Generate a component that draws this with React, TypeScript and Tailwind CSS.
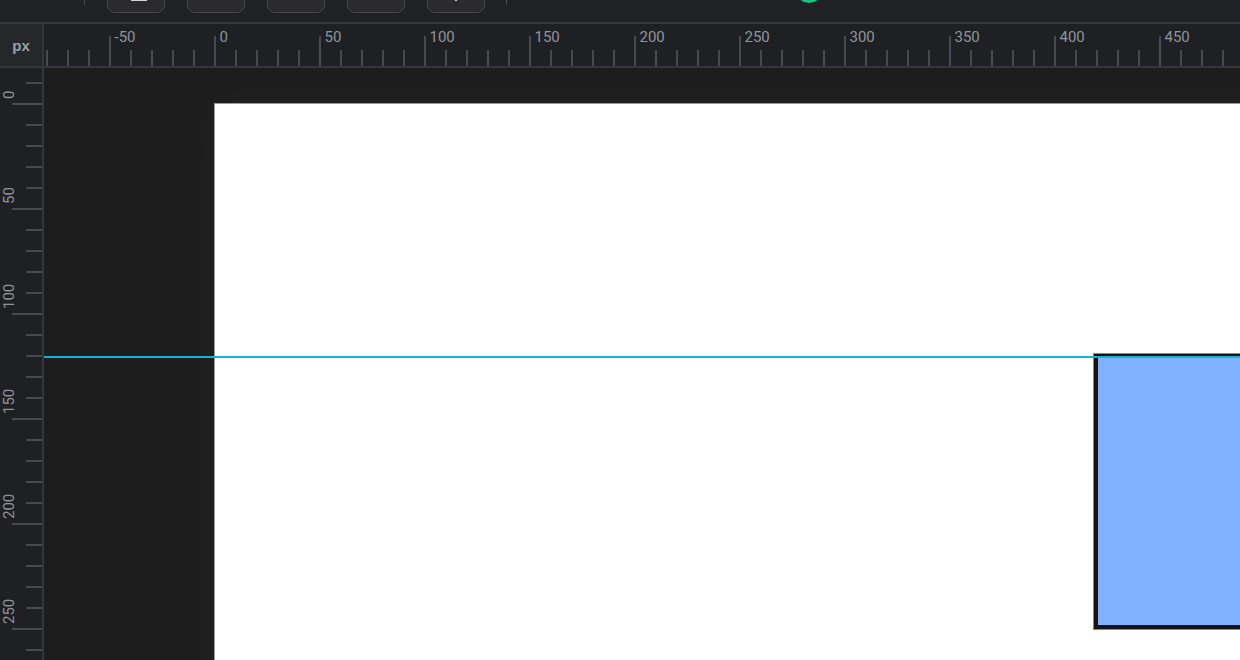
import React from "react";

const TICK = "#555a62";
const LABEL = "#8f949c";

function HRuler() {
  const items: React.ReactNode[] = [];
  for (let v = -80; v <= 480; v += 10) {
    const x = 171 + 2.1 * v;
    const major = v % 50 === 0;
    items.push(
      <rect key={"t" + v} x={x - 0.75} y={major ? 12 : 26} width={1.5} height={major ? 30 : 16} fill={TICK} />
    );
    if (major) {
      items.push(
        <text key={"l" + v} x={x + 4.5} y={18.3} fill={LABEL} fontSize={15} fontFamily="Roboto, 'Liberation Sans', sans-serif">
          {v}
        </text>
      );
    }
  }
  return (
    <svg width={1196} height={42} className="block">
      {items}
    </svg>
  );
}

function VRuler() {
  const items: React.ReactNode[] = [];
  for (let v = -10; v <= 270; v += 10) {
    const y = 36 + 2.1 * v;
    const major = v % 50 === 0;
    items.push(
      <rect key={"t" + v} x={major ? 12 : 26} y={y - 0.75} width={major ? 30 : 16} height={1.5} fill={TICK} />
    );
    if (major) {
      items.push(
        <text
          key={"l" + v}
          transform={`translate(13.8, ${y - 5}) rotate(-90)`}
          fill={LABEL}
          fontSize={15}
          fontFamily="Roboto, 'Liberation Sans', sans-serif"
        >
          {v}
        </text>
      );
    }
  }
  return (
    <svg width={42} height={592} className="block">
      {items}
    </svg>
  );
}

function ToolButton({ children }: { children?: React.ReactNode }) {
  return (
    <div className="relative flex h-[32px] w-[58px] shrink-0 flex-col items-center justify-end rounded-[8px] border border-[#46474c] bg-[#2a2a2e] pb-[11px]">
      {children}
    </div>
  );
}

export default function App() {
  return (
    <div className="flex h-[660px] w-[1240px] flex-col overflow-hidden bg-[#1d1d1e] font-['Liberation_Sans',sans-serif]">
      {/* toolbar */}
      <div className="flex h-[24px] shrink-0 items-end overflow-hidden border-b-2 border-[#37383c] bg-[#202124] pb-[9px]">
        <div className="mb-[8px] ml-[84px] h-[24px] w-px shrink-0 bg-[#4a4b50]" />
        <div className="ml-[22px] flex gap-[22px]">
          <ToolButton>
            <div className="ml-[6px] h-[2px] w-[16px] bg-[#d4d4d6]" />
          </ToolButton>
          <ToolButton />
          <ToolButton />
          <ToolButton />
          <ToolButton>
            <div className="h-[2px] w-[2px] bg-[#d4d4d6]" />
          </ToolButton>
        </div>
        <div className="mb-[8px] ml-[21px] h-[24px] w-px shrink-0 bg-[#4a4b50]" />
        <div className="mb-[10px] ml-[288px] h-[28px] w-[28px] shrink-0 rounded-full bg-[#12c47b]" />
      </div>

      {/* ruler row */}
      <div className="flex h-[44px] shrink-0 border-b-2 border-[#34363b]">
        <div className="flex h-[42px] w-[44px] shrink-0 items-center justify-center border-r-2 border-[#34363b] bg-[#25272b]">
          <span className="text-[15px] font-bold leading-none text-[#9aa0a8]">px</span>
        </div>
        <div className="flex-1 bg-[#1f2023]">
          <HRuler />
        </div>
      </div>

      {/* main */}
      <div className="flex min-h-0 flex-1">
        <div className="w-[44px] shrink-0 border-r-2 border-[#34363b] bg-[#1f2023]">
          <VRuler />
        </div>
        <div className="relative min-w-0 flex-1 overflow-hidden bg-[#1d1d1e] pl-[170px] pt-[35px]">
          <div className="relative h-[800px] w-[1400px] border border-[#9a9a9a] bg-white shadow-[0_0_50px_rgba(255,255,255,0.03)]">
            <div className="absolute left-[878px] top-[249px] h-[277px] w-[400px] border border-[#8a8a8a]">
              <div className="h-full w-full border-4 border-[#141414] bg-[#80b1ff]" />
            </div>
          </div>
          <div className="absolute left-0 right-0 top-[288px] h-[2px] bg-[#14b4d4]" />
        </div>
      </div>
    </div>
  );
}
